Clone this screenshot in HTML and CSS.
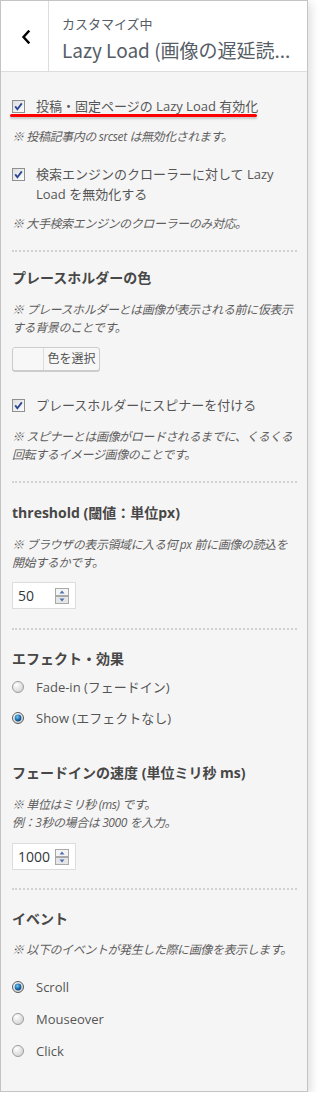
FILE: index.html
```html
<!DOCTYPE html>
<html lang="ja">
<head>
<meta charset="utf-8">
<title>カスタマイズ中</title>
<link rel="stylesheet" href="styles.css">
</head>
<body>
<div class="panel">
  <div class="header">
    <div class="back">
      <svg width="10" height="14" viewBox="0 0 10 14"><path d="M7.5 1.5 L2.5 7 L7.5 12.5" fill="none" stroke="#000" stroke-width="2.4" stroke-linecap="square"/></svg>
    </div>
    <div class="titles">
      <div class="sub">カスタマイズ中</div>
      <div class="title">Lazy Load (画像の遅延読...</div>
    </div>
  </div>
  <div class="content">
    <div class="row mark m24">
      <span class="box"><svg width="13" height="13" viewBox="0 0 13 13"><defs><linearGradient id="cb" x1="0" y1="0" x2="1" y2="1"><stop offset="0" stop-color="#dcdcdc"/><stop offset="1" stop-color="#fff"/></linearGradient></defs><rect x="0.5" y="0.5" width="12" height="12" fill="url(#cb)" stroke="#8e8f8f"/><path d="M3.2 6.4 L5.4 9.2 L9.8 3.4" fill="none" stroke="#2a4696" stroke-width="1.8"/></svg></span>
      <span class="label">投稿・固定ページの Lazy Load 有効化</span>
    </div>
    <p class="desc m12">※ 投稿記事内の srcset は無効化されます。</p>

    <div class="row m18">
      <span class="box"><svg width="13" height="13" viewBox="0 0 13 13"><rect x="0.5" y="0.5" width="12" height="12" fill="url(#cb)" stroke="#8e8f8f"/><path d="M3.2 6.4 L5.4 9.2 L9.8 3.4" fill="none" stroke="#2a4696" stroke-width="1.8"/></svg></span>
      <span class="label">検索エンジンのクローラーに対して Lazy Load を無効化する</span>
    </div>
    <p class="desc m11">※ 大手検索エンジンのクローラーのみ対応。</p>

    <div class="sep m17"></div>
    <h3 class="heading m16">プレースホルダーの色</h3>
    <p class="desc m13">※ プレースホルダーとは画像が表示される前に仮表示<br>する背景のことです。</p>
    <div class="colorbtn m10"><span class="swatch"></span><span class="ctext">色を選択</span></div>

    <div class="row m24">
      <span class="box"><svg width="13" height="13" viewBox="0 0 13 13"><rect x="0.5" y="0.5" width="12" height="12" fill="url(#cb)" stroke="#8e8f8f"/><path d="M3.2 6.4 L5.4 9.2 L9.8 3.4" fill="none" stroke="#2a4696" stroke-width="1.8"/></svg></span>
      <span class="label">プレースホルダーにスピナーを付ける</span>
    </div>
    <p class="desc m13">※ スピナーとは画像がロードされるまでに、くるくる<br>回転するイメージ画像のことです。</p>

    <div class="sep m17"></div>
    <h3 class="heading m20">threshold (閾値：単位px)</h3>
    <p class="desc m13">※ ブラウザの表示領域に入る何 px 前に画像の読込を<br>開始するかです。</p>
    <div class="num m10"><span class="val">50</span><span class="spin"><svg width="14" height="16" viewBox="0 0 14 16"><rect x="0.5" y="0.5" width="13" height="7" fill="#f4f4f4" stroke="#a9a9a9"/><rect x="0.5" y="8.5" width="13" height="7" fill="#e6e6e6" stroke="#a9a9a9"/><path d="M4.5 5.5 L7 2.5 L9.5 5.5 Z" fill="#4f6fb3"/><path d="M4.5 10.5 L7 13.5 L9.5 10.5 Z" fill="#4f6fb3"/></svg></span></div>

    <div class="sep m19"></div>
    <h3 class="heading m19">エフェクト・効果</h3>
    <div class="row m8">
      <span class="rbox"><svg width="12" height="12" viewBox="0 0 12 12"><defs><radialGradient id="ro" cx="0.35" cy="0.3" r="0.8"><stop offset="0" stop-color="#fff"/><stop offset="1" stop-color="#cfcfcf"/></radialGradient><radialGradient id="rd" cx="0.4" cy="0.35" r="0.7"><stop offset="0" stop-color="#7cc6f2"/><stop offset="0.6" stop-color="#1a6fb0"/><stop offset="1" stop-color="#0c3f6e"/></radialGradient></defs><circle cx="6" cy="6" r="5.5" fill="url(#ro)" stroke="#9c9c9c"/></svg></span>
      <span class="label">Fade-in (フェードイン)</span>
    </div>
    <div class="row m11">
      <span class="rbox"><svg width="12" height="12" viewBox="0 0 12 12"><circle cx="6" cy="6" r="5.5" fill="url(#ro)" stroke="#5a5a5a"/><circle cx="6" cy="6" r="3.4" fill="url(#rd)"/></svg></span>
      <span class="label">Show (エフェクトなし)</span>
    </div>

    <h3 class="heading m35">フェードインの速度 (単位ミリ秒 ms)</h3>
    <p class="desc m13">※ 単位はミリ秒 (ms) です。<br>例：3秒の場合は 3000 を入力。</p>
    <div class="num m11"><span class="val">1000</span><span class="spin"><svg width="14" height="16" viewBox="0 0 14 16"><rect x="0.5" y="0.5" width="13" height="7" fill="#f4f4f4" stroke="#a9a9a9"/><rect x="0.5" y="8.5" width="13" height="7" fill="#e6e6e6" stroke="#a9a9a9"/><path d="M4.5 5.5 L7 2.5 L9.5 5.5 Z" fill="#4f6fb3"/><path d="M4.5 10.5 L7 13.5 L9.5 10.5 Z" fill="#4f6fb3"/></svg></span></div>

    <div class="sep m18"></div>
    <h3 class="heading m19">イベント</h3>
    <p class="desc m12">※ 以下のイベントが発生した際に画像を表示します。</p>
    <div class="row m18">
      <span class="rbox"><svg width="12" height="12" viewBox="0 0 12 12"><circle cx="6" cy="6" r="5.5" fill="url(#ro)" stroke="#5a5a5a"/><circle cx="6" cy="6" r="3.4" fill="url(#rd)"/></svg></span>
      <span class="label">Scroll</span>
    </div>
    <div class="row m12">
      <span class="rbox"><svg width="12" height="12" viewBox="0 0 12 12"><circle cx="6" cy="6" r="5.5" fill="url(#ro)" stroke="#9c9c9c"/></svg></span>
      <span class="label">Mouseover</span>
    </div>
    <div class="row m12">
      <span class="rbox"><svg width="12" height="12" viewBox="0 0 12 12"><circle cx="6" cy="6" r="5.5" fill="url(#ro)" stroke="#9c9c9c"/></svg></span>
      <span class="label">Click</span>
    </div>
  </div>
</div>
</body>
</html>
```

FILE: styles.css
```css
html, body {
  margin: 0;
  padding: 0;
  background: #fff;
}
body {
  font-family: "Open Sans", "Noto Sans CJK JP", sans-serif;
  color: #555;
}
.panel {
  box-sizing: border-box;
  width: 308px;
  height: 1092px;
  border: 1px solid #c4c4c4;
  background: #f6f5f5;
  box-shadow: 3px 3px 9px rgba(0, 0, 0, 0.13);
  overflow: hidden;
}
.header {
  display: flex;
  height: 70px;
  background: #fff;
  border-bottom: 1px solid #ddd;
}
.back {
  width: 45px;
  border-right: 1px solid #ddd;
  display: flex;
  align-items: center;
  justify-content: center;
  padding-left: 2px;
  padding-top: 1px;
}
.titles {
  flex: 1;
  min-width: 0;
  padding: 13px 2px 0 13px;
}
.sub {
  font-family: "Noto Sans CJK JP", sans-serif;
  font-size: 13px;
  line-height: 20px;
  color: #555d66;
}
.title {
  font-family: "Noto Sans CJK JP", sans-serif;
  font-size: 19px;
  line-height: 26px;
  margin-top: 3px;
  color: #555d66;
  white-space: nowrap;
}
.content {
  padding: 0 10px 0 11px;
}
.row {
  display: flex;
  align-items: flex-start;
  position: relative;
}
.box, .rbox {
  flex: none;
  width: 13px;
  height: 13px;
  margin: 4px 11px 0 0;
  display: flex;
}
.rbox {
  width: 12px;
  height: 12px;
  margin: 4px 12px 0 0;
}
.label {
  font-size: 13px;
  line-height: 20px;
  color: #555;
}
.mark::after {
  content: "";
  position: absolute;
  left: -2px;
  top: 18px;
  width: 247px;
  height: 3px;
  border-radius: 2px;
  background: #f00;
  box-shadow: 0 2px 2px rgba(0, 0, 0, 0.18);
}
.desc {
  margin: 0;
  font-size: 12px;
  line-height: 18px;
  letter-spacing: -0.4px;
  font-style: italic;
  color: #5f5f5f;
  white-space: nowrap;
}
.heading {
  margin: 0;
  font-size: 14px;
  line-height: 20px;
  font-weight: bold;
  color: #474747;
}
.sep {
  height: 0;
  border-top: 2px dotted #d2d2d2;
}
.colorbtn {
  display: flex;
  width: 88px;
  height: 24px;
  box-sizing: border-box;
  border: 1px solid #ccc;
  border-radius: 3px;
  background: #f7f7f7;
  box-shadow: 0 1px 0 #ccc;
}
.swatch {
  width: 30px;
  border-right: 1px solid #ddd;
  background: #f7f7f7;
  border-radius: 3px 0 0 3px;
}
.ctext {
  flex: 1;
  text-align: center;
  font-size: 12px;
  line-height: 22px;
  color: #555;
}
.num {
  display: flex;
  align-items: center;
  box-sizing: border-box;
  width: 64px;
  height: 27px;
  border: 1px solid #ddd;
  background: #fff;
  padding-left: 5px;
}
.val {
  flex: 1;
  font-size: 14px;
  color: #32373c;
}
.spin {
  display: flex;
  margin-right: 6px;
}
.m8 { margin-top: 8px; }
.m10 { margin-top: 10px; }
.m11 { margin-top: 11px; }
.m12 { margin-top: 12px; }
.m13 { margin-top: 13px; }
.m16 { margin-top: 16px; }
.m17 { margin-top: 17px; }
.m18 { margin-top: 18px; }
.m19 { margin-top: 19px; }
.m20 { margin-top: 20px; }
.m24 { margin-top: 24px; }
.m35 { margin-top: 35px; }
```
